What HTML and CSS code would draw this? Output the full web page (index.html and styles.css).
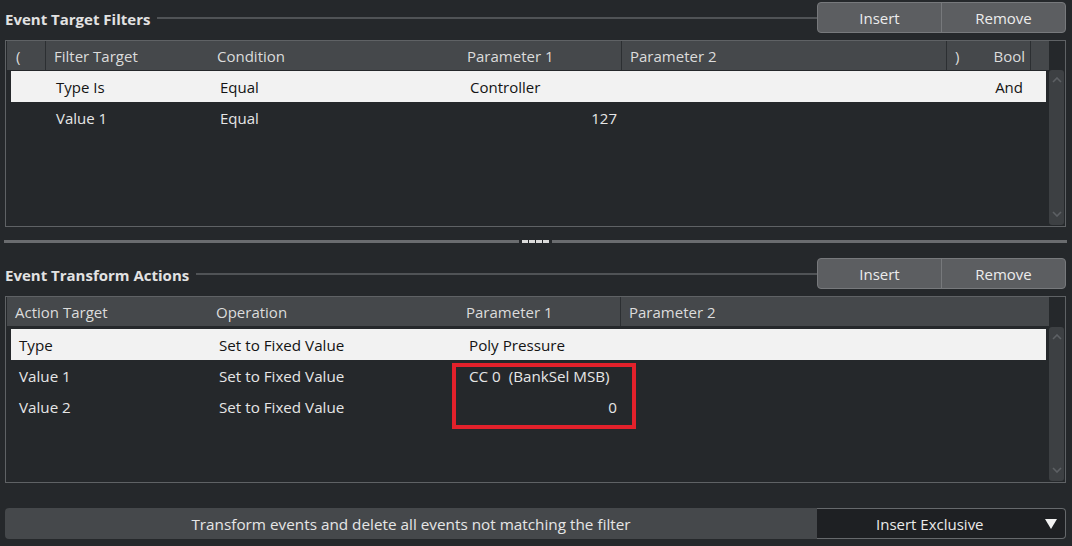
FILE: index.html
```html
<!DOCTYPE html>
<html>
<head>
<meta charset="utf-8">
<link rel="stylesheet" href="styles.css">
</head>
<body>
<div class="page">
  <section class="section">
    <div class="sec-head">
      <h2 class="sec-title">Event Target Filters</h2>
      <div class="sec-rule"></div>
      <div class="btn-group"><button class="btn">Insert</button><button class="btn">Remove</button></div>
    </div>
    <div class="frame">
      <div class="main">
        <div class="thead t1">
          <div class="th">(</div>
          <div class="th sep">Filter Target</div>
          <div class="th">Condition</div>
          <div class="th">Parameter 1</div>
          <div class="th sep">Parameter 2</div>
          <div class="th sep">)</div>
          <div class="th right">Bool</div>
          <div class="th sep"></div>
        </div>
        <div class="tbody">
          <div class="row t1r sel">
            <div class="td"></div>
            <div class="td">Type Is</div>
            <div class="td">Equal</div>
            <div class="td">Controller</div>
            <div class="td"></div>
            <div class="td"></div>
            <div class="td right">And</div>
            <div class="td"></div>
          </div>
          <div class="row t1r">
            <div class="td"></div>
            <div class="td">Value 1</div>
            <div class="td">Equal</div>
            <div class="td right">127</div>
            <div class="td"></div>
            <div class="td"></div>
            <div class="td"></div>
            <div class="td"></div>
          </div>
        </div>
      </div>
      <div class="scrollbar">
        <svg class="chev" width="10" height="6" viewBox="0 0 10 6"><path d="M1 5 L5 1 L9 5" fill="none" stroke="#5d6064" stroke-width="1.6"/></svg>
        <svg class="chev" width="10" height="6" viewBox="0 0 10 6"><path d="M1 1 L5 5 L9 1" fill="none" stroke="#5d6064" stroke-width="1.6"/></svg>
      </div>
    </div>
  </section>

  <div class="splitter">
    <div class="split-bar"></div>
    <div class="grip"><span></span><span></span><span></span><span></span></div>
    <div class="split-bar"></div>
  </div>

  <section class="section sec2">
    <div class="sec-head">
      <h2 class="sec-title">Event Transform Actions</h2>
      <div class="sec-rule"></div>
      <div class="btn-group"><button class="btn">Insert</button><button class="btn">Remove</button></div>
    </div>
    <div class="frame annotated">
      <div class="main">
        <div class="thead t2">
          <div class="th">Action Target</div>
          <div class="th">Operation</div>
          <div class="th">Parameter 1</div>
          <div class="th sep">Parameter 2</div>
        </div>
        <div class="tbody gap2">
          <div class="row t2r sel">
            <div class="td">Type</div>
            <div class="td">Set to Fixed Value</div>
            <div class="td">Poly Pressure</div>
            <div class="td"></div>
          </div>
          <div class="row t2r">
            <div class="td">Value 1</div>
            <div class="td">Set to Fixed Value</div>
            <div class="td">CC 0&nbsp; (BankSel MSB)</div>
            <div class="td"></div>
          </div>
          <div class="row t2r">
            <div class="td">Value 2</div>
            <div class="td">Set to Fixed Value</div>
            <div class="td right">0</div>
            <div class="td"></div>
          </div>
        </div>
      </div>
      <div class="scrollbar sb2">
        <svg class="chev" width="10" height="6" viewBox="0 0 10 6"><path d="M1 5 L5 1 L9 5" fill="none" stroke="#5d6064" stroke-width="1.6"/></svg>
        <svg class="chev" width="10" height="6" viewBox="0 0 10 6"><path d="M1 1 L5 5 L9 1" fill="none" stroke="#5d6064" stroke-width="1.6"/></svg>
      </div>
      <div class="highlight"></div>
    </div>
  </section>

  <div class="bottom-bar">
    <div class="mode-label">Transform events and delete all events not matching the filter</div>
    <div class="dropdown">
      <span class="dd-text">Insert Exclusive</span>
      <svg class="dd-arrow" width="12" height="10" viewBox="0 0 12 10"><polygon points="0,0 12,0 6,10" fill="#f2f2f2"/></svg>
    </div>
  </div>
</div>
</body>
</html>
```

FILE: styles.css
```css
* { box-sizing: border-box; }
html, body { margin: 0; padding: 0; }
body {
  background: #25282b;
  font-family: "Open Sans", "Noto Sans", sans-serif;
  font-size: 15px;
  color: #e6e6e6;
  width: 1072px;
  height: 546px;
  overflow: hidden;
}
.page {
  display: flex;
  flex-direction: column;
  padding: 2px 6px 0 5px;
}
.section { display: flex; flex-direction: column; gap: 7px; }
.sec-head {
  display: flex;
  align-items: center;
  height: 31px;
}
.sec-title {
  margin: 0 0 -2px;
  font-size: 15px;
  font-weight: 700;
  color: #e2e2e2;
  white-space: nowrap;
  letter-spacing: 0;
}
.sec-rule {
  flex: 1;
  height: 2px;
  background: #505356;
  margin: 1px 0 0 7px;
}
.btn-group {
  display: flex;
  width: 249px;
  height: 31px;
  background: #5c5e61;
  border: 1px solid #77797c;
  border-radius: 4px;
}
.btn {
  flex: 1;
  background: transparent;
  border: 0;
  color: #ececec;
  font-family: inherit;
  font-size: 15px;
  padding: 1px 0 0;
}
.btn + .btn { border-left: 1px solid #77797c; }

.frame {
  position: relative;
  display: flex;
  height: 187px;
  border: 1px solid #5f6265;
}
.main { flex: 1; display: flex; flex-direction: column; }
.thead {
  display: grid;
  height: 29px;
  margin-left: 1px;
  background: #45484b;
  color: #dcdcdc;
  align-items: stretch;
}
.th {
  display: flex;
  align-items: center;
  padding-left: 8px;
  padding-top: 1px;
  white-space: nowrap;
}
.th.sep { border-left: 1px solid #2c2f32; }
.th.right { justify-content: flex-end; padding-right: 5px; }
.t1 { grid-template-columns: 38px 163px 250px 163px 325px 37px 47px 19px; }
.t1 .th:first-child { padding-left: 9px; }
.t1 .th:nth-child(3), .t1 .th:nth-child(4) { padding-left: 9px; }
.t2 { grid-template-columns: 201px 250px 162px 1fr; }

.tbody { display: flex; flex-direction: column; margin-top: 1px; }
.tbody.gap2 { margin-top: 3px; }
.row {
  display: grid;
  height: 31px;
  margin-left: 5px;
  margin-right: 3px;
}
.row.sel { background: #f2f2f2; color: #141414; }
.td {
  display: flex;
  align-items: center;
  white-space: nowrap;
  padding-left: 10px;
  padding-top: 1px;
}
.td.right { justify-content: flex-end; padding-right: 4px; }
.t1r { grid-template-columns: 35px 162px 250px 163px 325px 37px 48px 15px; }
.t1r .td { padding-top: 0; }
.t1r .td:nth-child(3), .t1r .td:nth-child(4) { padding-left: 12px; }
.t1r .td:nth-child(7) { padding-right: 8px; }
.t2r { grid-template-columns: 197px 250px 163px 1fr; font-size: 15.2px; }
.t2r .td:first-child { padding-left: 8px; }
.t2r .td:nth-child(2), .t2r .td:nth-child(3) { padding-left: 11px; }

.scrollbar {
  width: 15px;
  margin: 29px 1px 1px 0;
  background: #3d4043;
  border-radius: 3px;
  display: flex;
  flex-direction: column;
  justify-content: space-between;
  align-items: center;
  padding: 7px 0 8px;
}
.sb2 { margin-top: 30px; }

.highlight {
  position: absolute;
  left: 446px;
  top: 66px;
  width: 184px;
  height: 66px;
  border: 4px solid #e3212b;
}

.splitter {
  display: flex;
  align-items: center;
  height: 3px;
  margin: 13px -1px 15px -1px;
}
.split-bar { flex: 1; height: 3px; background: #6a6c6f; }
.grip { display: flex; gap: 1px; padding: 0 3px; }
.grip span { width: 6px; height: 3px; background: #dadada; }

.bottom-bar {
  display: flex;
  height: 31px;
  margin-top: 25px;
}
.mode-label {
  width: 812px;
  background: #45484b;
  border-radius: 4px 0 0 4px;
  display: flex;
  align-items: center;
  justify-content: center;
  color: #e6e6e6;
  padding-top: 1px;
  font-size: 15.3px;
}
.dropdown {
  flex: 1;
  position: relative;
  background: #1e2023;
  border: 1px solid #66696c;
  border-left: 0;
  border-radius: 0 4px 4px 0;
  display: flex;
  align-items: center;
  padding-left: 59px;
  padding-top: 1px;
}
.dd-text { color: #eaeaea; }
.dd-arrow { position: absolute; right: 8px; top: 10px; }
```
